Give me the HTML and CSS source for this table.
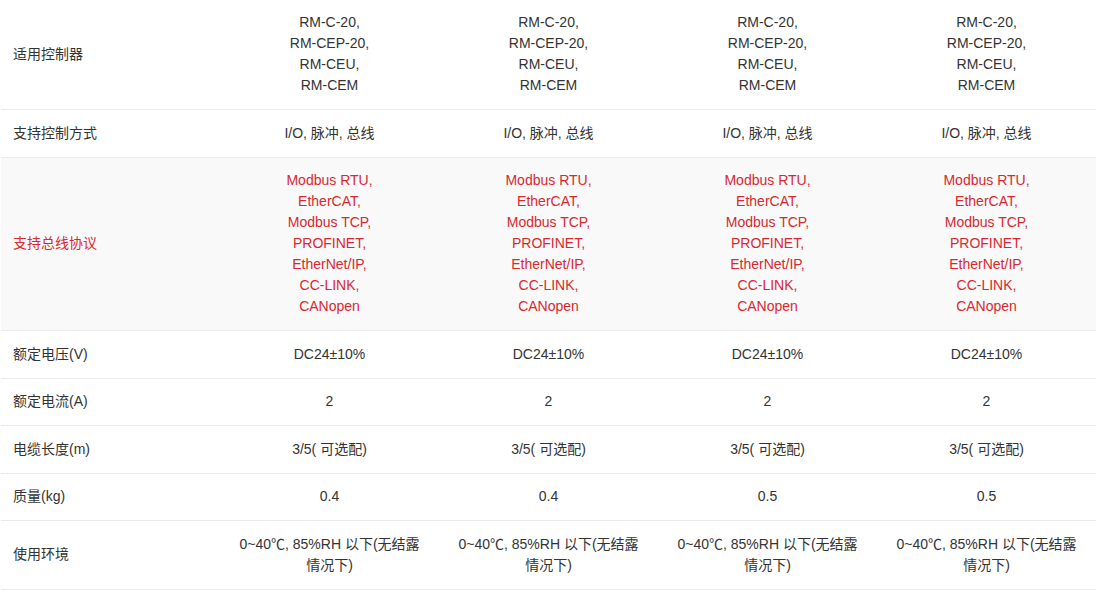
FILE: index.html
```html
<!DOCTYPE html>
<html lang="zh-CN">
<head>
<meta charset="utf-8">
<title>参数</title>
<link rel="stylesheet" href="styles.css">
</head>
<body>
<table class="spec">
  <colgroup>
    <col class="c-label"><col class="c-val"><col class="c-val"><col class="c-val"><col class="c-val">
  </colgroup>
  <tbody>
    <tr class="first">
      <td class="label">适用控制器</td>
      <td>RM-C-20,<br>RM-CEP-20,<br>RM-CEU,<br>RM-CEM</td>
      <td>RM-C-20,<br>RM-CEP-20,<br>RM-CEU,<br>RM-CEM</td>
      <td>RM-C-20,<br>RM-CEP-20,<br>RM-CEU,<br>RM-CEM</td>
      <td>RM-C-20,<br>RM-CEP-20,<br>RM-CEU,<br>RM-CEM</td>
    </tr>
    <tr>
      <td class="label">支持控制方式</td>
      <td>I/O, 脉冲, 总线</td>
      <td>I/O, 脉冲, 总线</td>
      <td>I/O, 脉冲, 总线</td>
      <td>I/O, 脉冲, 总线</td>
    </tr>
    <tr class="hl">
      <td class="label">支持总线协议</td>
      <td>Modbus RTU,<br>EtherCAT,<br>Modbus TCP,<br>PROFINET,<br>EtherNet/IP,<br>CC-LINK,<br>CANopen</td>
      <td>Modbus RTU,<br>EtherCAT,<br>Modbus TCP,<br>PROFINET,<br>EtherNet/IP,<br>CC-LINK,<br>CANopen</td>
      <td>Modbus RTU,<br>EtherCAT,<br>Modbus TCP,<br>PROFINET,<br>EtherNet/IP,<br>CC-LINK,<br>CANopen</td>
      <td>Modbus RTU,<br>EtherCAT,<br>Modbus TCP,<br>PROFINET,<br>EtherNet/IP,<br>CC-LINK,<br>CANopen</td>
    </tr>
    <tr>
      <td class="label">额定电压(V)</td>
      <td>DC24±10%</td><td>DC24±10%</td><td>DC24±10%</td><td>DC24±10%</td>
    </tr>
    <tr>
      <td class="label">额定电流(A)</td>
      <td>2</td><td>2</td><td>2</td><td>2</td>
    </tr>
    <tr>
      <td class="label">电缆长度(m)</td>
      <td>3/5( 可选配)</td><td>3/5( 可选配)</td><td>3/5( 可选配)</td><td>3/5( 可选配)</td>
    </tr>
    <tr>
      <td class="label">质量(kg)</td>
      <td>0.4</td><td>0.4</td><td>0.5</td><td>0.5</td>
    </tr>
    <tr>
      <td class="label">使用环境</td>
      <td>0~40℃, 85%RH 以下(无结露情况下)</td>
      <td>0~40℃, 85%RH 以下(无结露情况下)</td>
      <td>0~40℃, 85%RH 以下(无结露情况下)</td>
      <td>0~40℃, 85%RH 以下(无结露情况下)</td>
    </tr>
  </tbody>
</table>
</body>
</html>
```

FILE: styles.css
```css
html, body {
  margin: 0;
  padding: 0;
  background: #ffffff;
}

body {
  font-family: "Liberation Sans", Arial, "Noto Sans CJK SC", sans-serif;
  font-size: 14px;
  line-height: 21px;
  color: #333333;
}

.spec {
  border-collapse: collapse;
  table-layout: fixed;
  width: 1095px;
  margin-left: 1px;
}

.c-label,
.c-val {
  width: 219px;
}

.spec td {
  padding: 12.75px 15px;
  text-align: center;
  vertical-align: middle;
  border-bottom: 1px solid #ebebeb;
}

.spec td.label {
  text-align: left;
  padding-left: 12px;
}

.spec tr.first td {
  padding-top: 12.25px;
}

.spec tr.hl td {
  background: #f9f9f9;
  color: #d9282f;
}
```
